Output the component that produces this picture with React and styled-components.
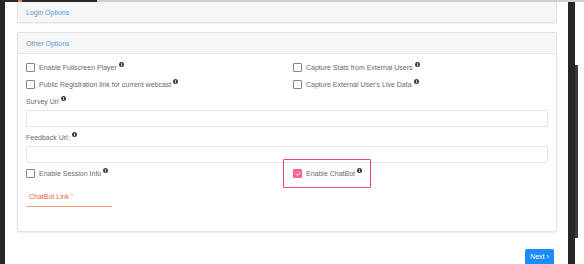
import React from 'react';
import styled, { createGlobalStyle } from 'styled-components';

const GlobalStyle = createGlobalStyle`
  html, body {
    margin: 0;
    padding: 0;
    background: #ffffff;
  }
  body {
    font-family: "Liberation Sans", Arial, sans-serif;
    color: #555;
  }
`;

const Screen = styled.div`
  width: 584px;
  height: 264px;
  overflow: hidden;
  display: flex;
  flex-direction: column;
  background: #fff;
`;

const TopEdge = styled.div`
  height: 2px;
  flex: none;
  display: flex;
  background: #cfcfcf;
`;

const TopDark = styled.div`
  width: 97px;
  background: #2a2a2a;
  position: relative;

  &::after {
    content: '';
    position: absolute;
    left: 18px;
    top: 0;
    width: 4px;
    height: 2px;
    background: #e8823a;
  }
`;

const Body = styled.div`
  flex: 1;
  display: flex;
  min-height: 0;
`;

const SideStrip = styled.div`
  width: ${(p) => p.$w}px;
  flex: none;
  background: #262626;
`;

const ScrollTrack = styled.div`
  width: 9px;
  flex: none;
  background: #fff;
  padding: 63px 6px 26px 0;
  box-sizing: border-box;
  display: flex;
`;

const ScrollThumb = styled.div`
  flex: 1;
  background: #3a3a3a;
`;

const Main = styled.main`
  flex: 1;
  padding: 0 11px 0 12px;
  display: flex;
  flex-direction: column;
  min-width: 0;
`;

const Panel = styled.section`
  border: 1px solid #e3e3e3;
  border-radius: 2px;
  background: #fff;
  box-shadow: 0 1px 2px rgba(0, 0, 0, 0.08);
  ${(p) => (p.$cut ? 'border-top: none; border-radius: 0 0 2px 2px;' : '')}
  margin-top: ${(p) => p.$mt || 0}px;
`;

const PanelHeader = styled.div`
  height: ${(p) => p.$h}px;
  display: flex;
  align-items: center;
  padding: 0 8px;
  background: #f6f6f6;
  color: #5a9bd0;
  font-size: 7px;
  ${(p) => (p.$line ? 'border-bottom: 1px solid #e6e6e6;' : '')}
`;

const PanelBody = styled.div`
  padding: 5px 8px 24px 8px;
`;

const Grid = styled.div`
  display: grid;
  grid-template-columns: 257px 1fr;
`;

const Cell = styled.div`
  height: 17px;
  display: flex;
  align-items: center;
  padding-left: ${(p) => (p.$right ? 10 : 0)}px;
  position: relative;
`;

const Box = styled.span`
  width: 9px;
  height: 9px;
  box-sizing: border-box;
  flex: none;
  border-radius: 1px;
  border: 1px solid ${(p) => (p.$checked ? '#f0608f' : '#858585')};
  background: ${(p) => (p.$checked ? '#f36b96' : '#fff')};
  display: flex;
  align-items: center;
  justify-content: center;
  margin-right: 4px;
`;

const Label = styled.span`
  font-size: 7px;
  color: #6a6a6a;
  white-space: nowrap;
  display: inline-flex;
  align-items: flex-start;
`;

const InfoDot = styled.svg`
  width: 5px;
  height: 5px;
  margin-left: 2px;
  margin-top: -2px;
  flex: none;
`;

const Highlight = styled.span`
  position: absolute;
  left: 0;
  top: -6px;
  width: 88px;
  height: 29px;
  box-sizing: border-box;
  border: 1.5px solid #f0456a;
  border-radius: 1px;
  pointer-events: none;
`;

const Field = styled.div`
  margin-top: ${(p) => p.$mt || 0}px;
`;

const FieldLabel = styled.div`
  height: 16px;
  display: flex;
  align-items: center;
`;

const TextInput = styled.input`
  display: block;
  width: 100%;
  height: 17px;
  box-sizing: border-box;
  margin: 1px 0 0;
  border: 1px solid #e2e4ea;
  border-radius: 2px;
  padding: 0 4px;
  font: 7px "Liberation Sans", Arial, sans-serif;
  outline: none;
`;

const SessionRow = styled(Grid)`
  margin-top: 2px;
`;

const LinkField = styled.div`
  width: 83px;
  margin: 8px 0 0 1px;
  padding: 2px 0 5px 2px;
  border-bottom: 1px solid #f29a80;
  font-size: 7px;
  color: #ec6646;
  line-height: 9px;

  sup {
    font-size: 5px;
    color: #999;
    vertical-align: top;
    margin-left: 2px;
  }
`;

const Footer = styled.div`
  display: flex;
  justify-content: flex-end;
  margin-top: 17px;
  padding-right: 3px;
`;

const NextButton = styled.button`
  width: 29px;
  height: 18px;
  border: none;
  border-radius: 2px;
  background: #1a8cf5;
  color: #fff;
  font: 7px "Liberation Sans", Arial, sans-serif;
  padding: 0 0 3px;
  cursor: pointer;
`;

function Info() {
  return (
    <InfoDot viewBox="0 0 10 10">
      <circle cx="5" cy="5" r="5" fill="#3d3d3d" />
      <rect x="4.2" y="4.2" width="1.6" height="3.8" fill="#fff" />
      <rect x="4.2" y="2" width="1.6" height="1.5" fill="#fff" />
    </InfoDot>
  );
}

function Check({ label, checked, right, highlight }) {
  return (
    <Cell $right={right}>
      {highlight && <Highlight />}
      <Box $checked={checked}>
        {checked && (
          <svg width="6" height="6" viewBox="0 0 10 10">
            <path d="M1.5 5.2 L4 7.6 L8.6 2.6" stroke="#fff" strokeWidth="1.4" fill="none" />
          </svg>
        )}
      </Box>
      <Label>
        {label}
        <Info />
      </Label>
    </Cell>
  );
}

export default function App() {
  return (
    <Screen>
      <GlobalStyle />
      <TopEdge>
        <TopDark />
      </TopEdge>
      <Body>
        <SideStrip $w={5} />
        <Main>
          <Panel $cut>
            <PanelHeader $h={20}>Login Options</PanelHeader>
          </Panel>

          <Panel $mt={9}>
            <PanelHeader $h={20} $line>Other Options</PanelHeader>
            <PanelBody>
              <Grid>
                <Check label="Enable Fullscreen Player" />
                <Check right label="Capture Stats from External Users" />
                <Check label="Public Registration link for current webcast" />
                <Check right label="Capture External User's Live Data" />
              </Grid>

              <Field>
                <FieldLabel>
                  <Label>
                    Survey Url
                    <Info />
                  </Label>
                </FieldLabel>
                <TextInput type="text" />
              </Field>

              <Field $mt={2}>
                <FieldLabel>
                  <Label>
                    Feedback Url:
                    <Info />
                  </Label>
                </FieldLabel>
                <TextInput type="text" />
              </Field>

              <SessionRow>
                <Check label="Enable Session Info" />
                <Check right checked highlight label="Enable ChatBot" />
              </SessionRow>

              <LinkField>
                ChatBot Link<sup>*</sup>
              </LinkField>
            </PanelBody>
          </Panel>

          <Footer>
            <NextButton type="button">Next ›</NextButton>
          </Footer>
        </Main>
        <SideStrip $w={7} />
        <ScrollTrack>
          <ScrollThumb />
        </ScrollTrack>
      </Body>
    </Screen>
  );
}
